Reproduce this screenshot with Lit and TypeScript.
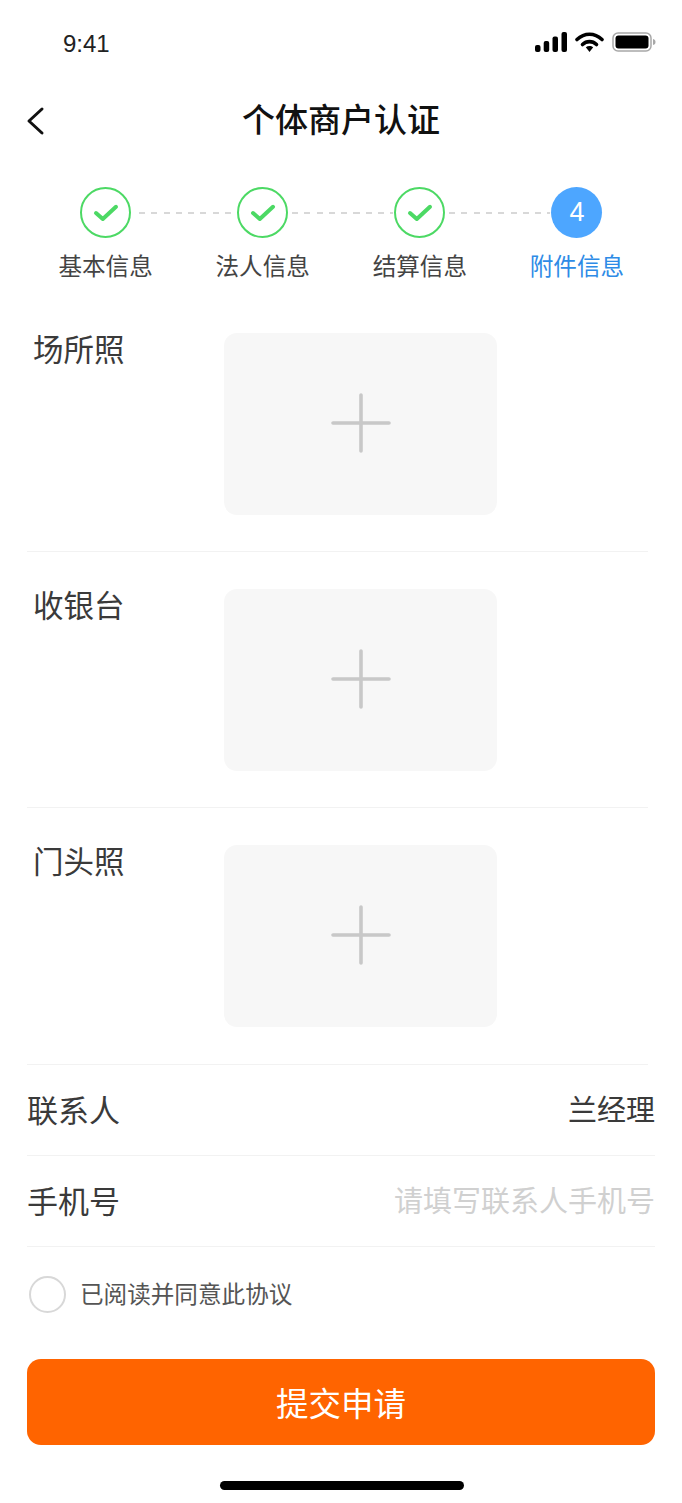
import { LitElement, css, html } from "lit";
import { customElement } from "lit/decorators.js";

const steps = [
  { label: "基本信息", done: true },
  { label: "法人信息", done: true },
  { label: "结算信息", done: true },
  { label: "附件信息", done: false },
];
const photos = ["场所照", "收银台", "门头照"];

@customElement("app-root")
export class AppRoot extends LitElement {
  static styles = css`
    :host {
      display: block;
      width: 682px;
      height: 1503px;
      background: #fff;
      overflow: hidden;
      font-family: "Noto Sans CJK SC", "Liberation Sans", sans-serif;
      color: #333;
    }
    .status {
      height: 88px;
      display: flex;
      align-items: center;
      justify-content: space-between;
      padding: 0 26px 0 63px;
    }
    .time {
      font-family: "Liberation Sans", sans-serif;
      font-size: 24px;
      color: #222;
    }
    .status-icons {
      display: flex;
      align-items: center;
      gap: 8px;
      margin-top: -4px;
    }
    .status-icons svg {
      display: block;
    }
    .nav {
      height: 64px;
      display: flex;
      align-items: center;
      justify-content: center;
      position: relative;
    }
    .back {
      position: absolute;
      left: 26px;
      top: 18px;
    }
    .title {
      font-size: 33px;
      font-weight: 500;
      line-height: 40px;
      color: #111;
      padding-bottom: 4px;
    }
    .steps {
      display: grid;
      grid-template-columns: repeat(4, 1fr);
      padding: 35px 26.5px 0 27px;
    }
    .step {
      display: flex;
      flex-direction: column;
      align-items: center;
      position: relative;
      gap: 10px;
    }
    .step:not(:last-child)::after {
      content: "";
      position: absolute;
      top: 25px;
      left: calc(50% + 29px);
      width: 101px;
      height: 2px;
      background: repeating-linear-gradient(90deg, #d8d8d8 0 6px, transparent 6px 12.3px);
    }
    .step:first-child::after {
      left: calc(50% + 33px);
      width: 96px;
    }
    .dot {
      width: 51px;
      height: 51px;
      box-sizing: border-box;
      border-radius: 50%;
      border: 2px solid #4cd964;
      display: flex;
      align-items: center;
      justify-content: center;
    }
    .dot.active {
      border: 0;
      background: #4da6ff;
      color: #fff;
      font-family: "Liberation Sans", sans-serif;
      font-size: 27px;
    }
    .step-label {
      font-size: 23.6px;
      line-height: 34px;
      color: #444;
    }
    .step-label.active {
      color: #2e8be6;
    }
    .photos {
      padding-top: 51px;
    }
    .photo-row {
      display: grid;
      grid-template-columns: 191px 273px;
      margin: 0 34px 0 27px;
      padding: 37px 0 36px 6px;
      border-bottom: 1px solid #f2f2f2;
    }
    .photo-row:first-child {
      padding-top: 0;
    }
    .photo-row:last-child {
      padding-bottom: 37px;
    }
    .photo-label {
      font-size: 30.5px;
      line-height: 30px;
      color: #3a3a3a;
    }
    .upload {
      height: 182px;
      border-radius: 13px;
      background: #f7f7f7;
      display: flex;
      align-items: center;
      justify-content: center;
    }
    .upload svg {
      margin-top: -2px;
    }
    .field {
      height: 86px;
      padding-bottom: 4px;
      margin: 0 27px;
      border-bottom: 1px solid #f2f2f2;
      display: flex;
      align-items: center;
      justify-content: space-between;
      font-size: 31px;
      color: #3a3a3a;
    }
    .value {
      font-size: 29px;
    }
    .placeholder {
      font-size: 29px;
      color: #d0d0d0;
    }
    .agree {
      height: 94px;
      margin-left: 29px;
      display: flex;
      align-items: center;
      gap: 14px;
      font-size: 23.6px;
      color: #555;
    }
    .agree span {
      padding-bottom: 2px;
    }
    .radio {
      width: 37px;
      height: 37px;
      box-sizing: border-box;
      border-radius: 50%;
      border: 2px solid #d8d8d8;
    }
    .submit {
      height: 84px;
      padding-bottom: 2px;
      margin: 18px 27px 0;
      border-radius: 14px;
      background: #ff6400;
      color: #fff;
      display: flex;
      align-items: center;
      justify-content: center;
      font-size: 32.5px;
    }
    .home {
      width: 244px;
      height: 9px;
      margin: 36px 0 0 220px;
      border-radius: 5px;
      background: #000;
    }
  `;

  renderStatusIcons() {
    return html`
      <div class="status-icons">
        <svg width="32" height="20" viewBox="0 0 32 20" fill="#000">
          <rect x="0" y="13" width="5.5" height="7" rx="2" />
          <rect x="8.7" y="9" width="5.5" height="11" rx="2" />
          <rect x="17.5" y="4.5" width="5.5" height="15.5" rx="2" />
          <rect x="26.5" y="0" width="5.5" height="20" rx="2" />
        </svg>
        <svg width="29" height="20" viewBox="0 0 29 20">
          <path d="M2 7.5C9.5 .5 19.5 .5 27 7.5" fill="none" stroke="#000" stroke-width="3.6" stroke-linecap="round" />
          <path d="M7.5 12.5C11.5 8.6 17.5 8.6 21.5 12.5" fill="none" stroke="#000" stroke-width="3.6" stroke-linecap="round" />
          <path d="M10.8 15.3C13 13.4 16 13.4 18.2 15.3L14.5 20Z" fill="#000" />
        </svg>
        <svg width="44" height="20" viewBox="0 0 44 20">
          <rect x="1" y="1" width="38" height="18" rx="5" fill="none" stroke="#a8a8a8" stroke-width="1.5" />
          <rect x="3.5" y="3.5" width="33" height="13" rx="3" fill="#000" />
          <path d="M41 7c2 .5 2.5 1.5 2.5 3s-.5 2.5-2.5 3Z" fill="#a8a8a8" />
        </svg>
      </div>
    `;
  }

  renderStep(step: { label: string; done: boolean }, index: number) {
    return html`
      <div class="step">
        ${step.done
          ? html`<div class="dot">
              <svg width="26" height="20" viewBox="0 0 26 20">
                <path d="M3 10L9.8 16L23 3.8" fill="none" stroke="#4cd964" stroke-width="4" stroke-linecap="round" stroke-linejoin="round" />
              </svg>
            </div>`
          : html`<div class="dot active">${index + 1}</div>`}
        <div class="step-label ${step.done ? "" : "active"}">${step.label}</div>
      </div>
    `;
  }

  renderPhoto(label: string) {
    return html`
      <div class="photo-row">
        <div class="photo-label">${label}</div>
        <div class="upload">
          <svg width="60" height="60" viewBox="0 0 60 60">
            <path d="M2 30H58M30 2V58" stroke="#c8c8c8" stroke-width="3.6" stroke-linecap="round" />
          </svg>
        </div>
      </div>
    `;
  }

  render() {
    return html`
      <div class="status">
        <div class="time">9:41</div>
        ${this.renderStatusIcons()}
      </div>
      <div class="nav">
        <svg class="back" width="20" height="30" viewBox="0 0 20 30">
          <path d="M16 3L3 15L16 27" fill="none" stroke="#111" stroke-width="3" stroke-linecap="round" stroke-linejoin="round" />
        </svg>
        <div class="title">个体商户认证</div>
      </div>
      <div class="steps">${steps.map((s, i) => this.renderStep(s, i))}</div>
      <div class="photos">${photos.map((p) => this.renderPhoto(p))}</div>
      <div class="field"><span>联系人</span><span class="value">兰经理</span></div>
      <div class="field"><span>手机号</span><span class="placeholder">请填写联系人手机号</span></div>
      <div class="agree"><div class="radio"></div><span>已阅读并同意此协议</span></div>
      <div class="submit">提交申请</div>
      <div class="home"></div>
    `;
  }
}
